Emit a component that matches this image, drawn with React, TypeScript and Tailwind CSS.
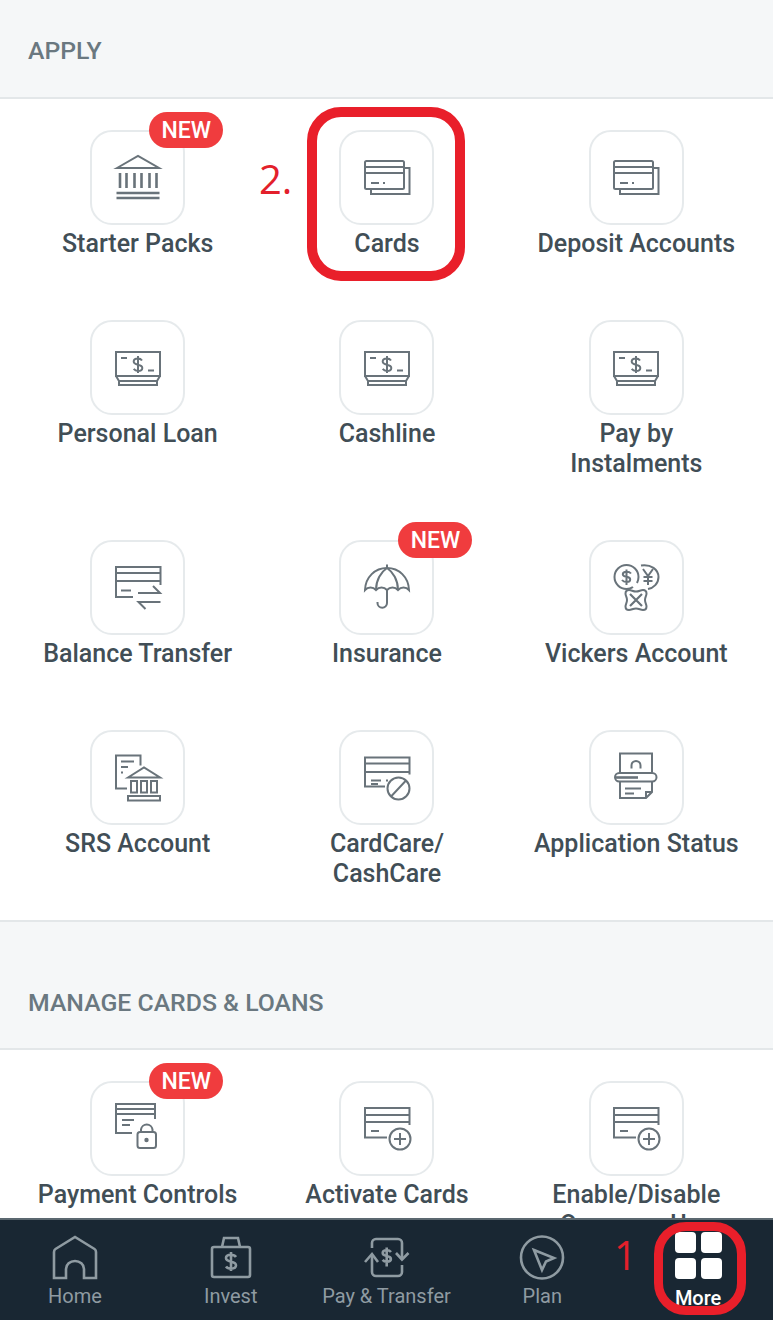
import type { ReactNode } from 'react';

interface Tile {
    label: string;
    icon: ReactNode;
    isNew?: boolean;
}

const Bank = (
    <>
        <path d="M9 20 30 8l21 12Z" />
        <path d="M12 25v15M18.500 25v15M26.500 25v15M33.500 25v15M41.500 25v15M48.500 25v15" strokeWidth="2.600" />
        <path d="M8.500 45h43M8.500 50h43" strokeWidth="2.600" />
    </>
);

const CardsIcon = (
    <>
        <rect x="8" y="13" width="39" height="28" rx="1.500" />
        <path d="M8 19h39M8 25h39" />
        <path d="M14 35h8M26 35h2" />
        <path d="M47 20h5.500v26H14v-5" />
    </>
);

const Money = (
    <>
        <rect x="8" y="14" width="44" height="24" />
        <path d="M8 38l3 5h38l3-5M11 43v4h38v-4" />
        <path d="M13 20h6M40 32.500h6" />
        <path d="M34 22.500c-1-1.500-2.500-2-4-2-2.500 0-4.300 1-4.300 3s1.800 2.700 4.300 3.200 4.300 1.300 4.300 3.200-1.800 3-4.300 3c-1.600 0-3.200-.6-4.300-2M30 18v17" />
    </>
);

const Balance = (
    <>
        <path d="M25 39H8V9h44.500v18" />
        <path d="M8 15h44.500M8 23h44.500" />
        <path d="M13 32.500h10" />
        <path d="M30 35h22l-7-7M52.500 44h-22l7 7" />
    </>
);

const Umbrella = (
    <>
        <path d="M30 6.500V10" />
        <path d="M8 32C8.500 19 18 10 30 10s21.500 9 22 22c-3-3.500-8-3.500-11 0-3-3.500-8-3.500-11 0-3-3.500-8-3.500-11 0-3-3.500-8-3.500-11 0Z" />
        <path d="M19 32c0-10 5-18 11-22 6 4 11 12 11 22" />
        <path d="M30 32v13a4.700 4.700 0 0 1-9.500 0v-1" />
    </>
);

const Vickers = (
    <>
        <path d="M27 29c-2 1.500-4 2-6.500 2a12 12 0 1 1 12-12c0 2-.5 4-1.500 6" />
        <path d="M35 7.500c10-1.500 17.500 4 17.500 11.500 0 6.500-5 11-10.500 12" />
        <path d="M25 15.500c-1-1.300-2.500-1.800-4.500-1.800s-3.700.9-3.700 2.500 1.700 2.200 3.700 2.600 3.700 1 3.700 2.600-1.700 2.500-3.700 2.500c-2 0-3.500-.6-4.500-1.900M20.500 11.500v15.500" />
        <path d="M37 11l5 7 5-7M42 18v9M37.500 19h9M37.500 23h9" />
        <path d="M23 32c2.500 0 4 1.500 7 1.500s4.500-1.500 7-1.500 3.500 1 3.500 3.500-1.500 3.500-1.500 6.500 1.500 4 1.500 6.500-1 3.500-3.500 3.500-4-1.500-7-1.500-4.500 1.500-7 1.500-3.500-1-3.500-3.500 1.500-3.500 1.500-6.500-1.500-4-1.500-6.500 1-3.500 3.500-3.500Z" />
        <path d="M24 36l12 12M36 36 24 48" strokeWidth="2.200" />
    </>
);

const SrsIcon = (
    <>
        <path d="M19 40.500H8V7.500h24.500v10" />
        <path d="M13 13.500h13M13 19h7M13 24.500h2" />
        <path d="M20 29.500 36 19.500l16 10Z" />
        <rect x="23" y="33" width="6" height="11.500" />
        <rect x="33" y="33" width="6" height="11.500" />
        <rect x="43" y="33" width="6" height="11.500" />
        <rect x="20" y="48" width="32" height="4.500" />
    </>
);

const CardCareIcon = (
    <>
        <path d="M28 38.500H8V9.500h44.500v17" />
        <path d="M8 15.500h44.500M8 24h44.500" />
        <path d="M14 32.500h10M14 36h7M29 32.500h2" />
        <circle cx="41.500" cy="40.500" r="11" />
        <path d="M34 48.500 49 32.500" />
    </>
);

const StatusIcon = (
    <>
        <path d="M14 24.500V5.500h32v19" />
        <path d="M25.500 20.500v-3a4.500 4.500 0 0 1 9 0v3" />
        <rect x="9" y="25" width="41.500" height="8.500" rx="4.250" />
        <path d="M9 29.500h23" strokeWidth="2.600" />
        <path d="M14 33.500V50h26l6-6V33.500M40 50v-6h6" />
        <path d="M19 40.500h16M19 45.500h9" />
    </>
);

const LockCard = (
    <>
        <path d="M24 34H8V5h39v15" />
        <path d="M8 10h39M8 15h39" />
        <path d="M14 21h12M14 26h8" />
        <rect x="29.500" y="33" width="18.500" height="16" rx="2.500" />
        <path d="M33 33v-2.500a5.800 5.800 0 0 1 11.500 0V33" />
        <circle cx="38.500" cy="41" r="1.200" fill="currentColor" />
    </>
);

const AddCard = (
    <>
        <path d="M30 38.500H8V9h44.500v17" />
        <path d="M8 16h44.500M8 23h44.500" />
        <path d="M14 32h8" />
        <circle cx="43" cy="40" r="10.500" />
        <path d="M43 34v12M37 40h12" />
    </>
);

const applyTiles: Tile[] = [
    { label: 'Starter Packs', icon: Bank, isNew: true },
    { label: 'Cards', icon: CardsIcon },
    { label: 'Deposit Accounts', icon: CardsIcon },
    { label: 'Personal Loan', icon: Money },
    { label: 'Cashline', icon: Money },
    { label: 'Pay by\nInstalments', icon: Money },
    { label: 'Balance Transfer', icon: Balance },
    { label: 'Insurance', icon: Umbrella, isNew: true },
    { label: 'Vickers Account', icon: Vickers },
    { label: 'SRS Account', icon: SrsIcon },
    { label: 'CardCare/\nCashCare', icon: CardCareIcon },
    { label: 'Application Status', icon: StatusIcon },
];

const manageTiles: Tile[] = [
    { label: 'Payment Controls', icon: LockCard, isNew: true },
    { label: 'Activate Cards', icon: AddCard },
    { label: 'Enable/Disable\nOverseas Use', icon: AddCard },
];

function TileItem({ tile }: { tile: Tile }) {
    return (
        <div className="flex flex-col items-center">
            <div className="relative flex h-[95px] w-[95px] items-center justify-center rounded-[22px] border-2 border-[#e6eaec] bg-white">
                <svg
                    className="h-[60px] w-[60px] text-[#69737a]"
                    viewBox="0 0 60 60"
                    fill="none"
                    stroke="currentColor"
                    strokeWidth="2"
                >
                    {tile.icon}
                </svg>
                {tile.isNew && (
                    <span className="absolute left-[57px] top-[-20px] flex h-[36px] w-[74px] items-center justify-center rounded-full bg-[#f03c3e] pt-[3px] text-[23px] font-medium text-white">
                        NEW
                    </span>
                )}
            </div>
            <p className="mt-[4px] whitespace-pre-line text-center text-[25px] font-medium leading-[30px] text-[#414e56]">
                {tile.label}
            </p>
        </div>
    );
}

function NavItem({ label, children }: { label: string; children: ReactNode }) {
    return (
        <div className="flex flex-col items-center">
            <svg
                className="h-[48px] w-[48px] text-[#8f9ba2]"
                viewBox="0 0 48 48"
                fill="none"
                stroke="currentColor"
                strokeWidth="2.600"
            >
                {children}
            </svg>
            <span className="mt-[2px] text-[20px] leading-[26px] text-[#8f9ba2]">{label}</span>
        </div>
    );
}

export default function App() {
    return (
        <div className="relative flex h-[1322px] w-[773px] flex-col overflow-hidden bg-white pb-[2px] font-['Roboto',sans-serif]">
            <main className="min-h-0 flex-1 overflow-hidden">
                <div className="flex h-[99px] items-center border-b-2 border-[#e3e7e9] bg-[#f5f7f8] px-[28px] pt-[5px]">
                    <h2 className="text-[24.800px] font-medium text-[#6a7880]">APPLY</h2>
                </div>
                <div className="grid grid-cols-3 gap-y-[61px] border-b-2 border-[#e3e7e9] pb-[31px] pl-[13px] pr-[12px] pt-[31px]">
                    {applyTiles.map((tile) => (
                        <TileItem key={tile.label} tile={tile} />
                    ))}
                </div>
                <div className="flex h-[128px] items-center border-b-2 border-[#e3e7e9] bg-[#f5f7f8] px-[28px] pt-[35px]">
                    <h2 className="text-[24.800px] font-medium text-[#6a7880]">MANAGE CARDS &amp; LOANS</h2>
                </div>
                <div className="grid grid-cols-3 pl-[13px] pr-[12px] pt-[31px]">
                    {manageTiles.map((tile) => (
                        <TileItem key={tile.label} tile={tile} />
                    ))}
                </div>
            </main>

            <nav className="mx-[-3px] grid h-[102px] shrink-0 grid-cols-5 border-t-2 border-[#5b6870] bg-[#192733] pt-[13px]">
                <NavItem label="Home">
                    <path d="M3 45V19q0-2 1.500-3L24 4l19.500 12q1.500 1 1.500 3v26H33v-9a9 8 0 0 0-18 0v9Z" />
                </NavItem>
                <NavItem label="Invest">
                    <rect x="5" y="14" width="38" height="30" rx="2" />
                    <path d="M15 14l2-9h14l2 9" />
                    <path d="M29 24c-1-1.500-2.800-2.200-5-2.200-3 0-5 1.200-5 3.300s2 3 5 3.600 5 1.500 5 3.600-2 3.300-5 3.300c-2.200 0-4-.8-5-2.200M24 19v19" />
                </NavItem>
                <NavItem label="Pay & Transfer">
                    <path d="M10 15v-5a4 4 0 0 1 4-4h22a4 4 0 0 1 4 4v16M10 22v17a4 4 0 0 0 4 4h22a4 4 0 0 0 4-4v-7" />
                    <path d="M3 29l7-8 6 8M34 20l6 6.500 6.500-6.500" />
                    <path d="M29 19c-1-1.200-2.400-1.800-4.200-1.800-2.400 0-4.100 1-4.100 2.700s1.700 2.500 4.100 3 4.100 1.200 4.100 3-1.700 2.700-4.100 2.700c-1.800 0-3.200-.6-4.200-1.800M24.700 14.500v19" />
                </NavItem>
                <NavItem label="Plan">
                    <circle cx="24" cy="24.500" r="21" />
                    <path d="M16 17l20 8-8 3.500L24 37Z" />
                </NavItem>
                <div className="flex flex-col items-center">
                    <div className="mt-[-1px] grid grid-cols-2 gap-[5px]">
                        <span className="h-[21px] w-[21px] rounded-[4px] bg-white" />
                        <span className="h-[21px] w-[21px] rounded-[4px] bg-white" />
                        <span className="h-[21px] w-[21px] rounded-[4px] bg-white" />
                        <span className="h-[21px] w-[21px] rounded-[4px] bg-white" />
                    </div>
                    <span className="mt-[6px] text-[20px] font-medium leading-[26px] text-white">More</span>
                </div>
            </nav>

            {/* red annotations drawn over the screenshot */}
            <div className="absolute left-[307px] top-[107px] h-[174px] w-[158px] rounded-[34px] border-[10px] border-[#e91f2a]" />
            <div className="absolute left-[654px] top-[1222px] h-[93px] w-[92px] rounded-[32px] border-[9px] border-[#e91f2a]" />
            <span className="absolute left-[259px] top-[152px] font-['Open_Sans',sans-serif] text-[40px] leading-[54px] text-[#e3202b]">2.</span>
            <span className="absolute left-[614px] top-[1228px] font-['Open_Sans',sans-serif] text-[40px] leading-[54px] text-[#e3202b]">1</span>
        </div>
    );
}
